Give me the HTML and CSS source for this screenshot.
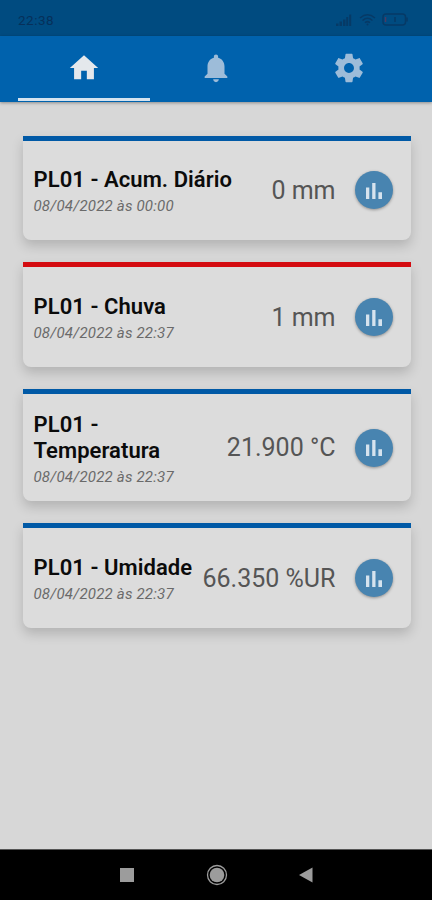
FILE: index.html
```html
<!DOCTYPE html>
<html lang="pt-BR">

<head>
    <meta charset="UTF-8">
    <meta name="viewport" content="width=device-width, initial-scale=1.0">
    <title>PL01</title>
    <link rel="stylesheet" href="styles.css">
</head>

<body>
    <div class="status">
        <span class="clock">22:38</span>
        <svg class="signal" width="16" height="12" viewBox="0 0 16 12">
            <path d="M0 9.5h2.5V12H0zM3.5 7.5H6V12H3.5zM7 5.5h2.5V12H7zM10.2 3h2V12h-2zM13.2 0.5h2V12h-2z" />
        </svg>
        <svg class="wifi" width="17" height="13" viewBox="0 0 17 13">
            <path d="M1 5Q8.500-1.500 16 5M3.500 7.500Q8.500 3 13.500 7.500M6 9.800Q8.500 7.500 11 9.800" />
            <circle cx="8.500" cy="11.500" r="1" />
        </svg>
        <svg class="battery" width="26" height="13" viewBox="0 0 26 13">
            <rect x="1" y="1" width="22.500" height="11" rx="3" />
            <path d="M25 4.500v4M13 4v5" />
            <path class="low" d="M3.500 4v5" />
        </svg>
    </div>

    <nav class="tabs">
        <a class="tab active">
            <svg viewBox="0 0 24 24"><path d="M10 20v-6h4v6h5v-8h3L12 3 2 12h3v8z" /></svg>
        </a>
        <a class="tab">
            <svg viewBox="0 0 24 24"><path d="M12 22c1.100 0 2-.9 2-2h-4c0 1.100.89 2 2 2zm6-6v-5c0-3.070-1.640-5.640-4.500-6.320V4c0-.83-.67-1.500-1.500-1.500s-1.500.67-1.500 1.500v.68C7.630 5.360 6 7.920 6 11v5l-2 2v1h16v-1l-2-2z" /></svg>
        </a>
        <a class="tab">
            <svg viewBox="0 0 24 24"><path d="M19.430 12.980c.04-.32.07-.64.07-.98s-.03-.66-.07-.98l2.110-1.650c.19-.15.24-.42.12-.64l-2-3.460c-.12-.22-.39-.3-.61-.22l-2.490 1c-.52-.4-1.080-.73-1.690-.98l-.38-2.650C14.460 2.180 14.250 2 14 2h-4c-.25 0-.46.18-.49.42l-.38 2.650c-.61.25-1.170.59-1.690.98l-2.490-1c-.23-.09-.49 0-.61.22l-2 3.460c-.13.22-.07.49.12.64l2.110 1.650c-.04.32-.07.65-.07.98s.03.66.07.98l-2.110 1.650c-.19.15-.24.42-.12.64l2 3.460c.12.22.39.3.61.22l2.490-1c.52.4 1.080.73 1.690.98l.38 2.650c.03.24.24.42.49.42h4c.25 0 .46-.18.49-.42l.38-2.650c.61-.25 1.170-.59 1.690-.98l2.490 1c.23.09.49 0 .61-.22l2-3.460c.12-.22.07-.49-.12-.64l-2.110-1.650zM12 15.500c-1.930 0-3.500-1.570-3.500-3.500s1.570-3.500 3.500-3.500 3.500 1.570 3.500 3.500-1.570 3.500-3.500 3.500z" /></svg>
        </a>
    </nav>

    <main>
        <div class="card">
            <div class="info">
                <h2>PL01 - Acum. Diário</h2>
                <p>08/04/2022 às 00:00</p>
            </div>
            <span class="value">0 mm</span>
            <button type="button">
                <svg viewBox="0 0 16 16"><path d="M0 4.500h3.300V16H0zM6.200 0h3.300v16H6.200zM12.400 9.300H16V16h-3.600z" /></svg>
            </button>
        </div>

        <div class="card alert">
            <div class="info">
                <h2>PL01 - Chuva</h2>
                <p>08/04/2022 às 22:37</p>
            </div>
            <span class="value">1 mm</span>
            <button type="button">
                <svg viewBox="0 0 16 16"><path d="M0 4.500h3.300V16H0zM6.200 0h3.300v16H6.200zM12.400 9.300H16V16h-3.600z" /></svg>
            </button>
        </div>

        <div class="card tall">
            <div class="info">
                <h2>PL01 - Temperatura</h2>
                <p>08/04/2022 às 22:37</p>
            </div>
            <span class="value">21.900 °C</span>
            <button type="button">
                <svg viewBox="0 0 16 16"><path d="M0 4.500h3.300V16H0zM6.200 0h3.300v16H6.200zM12.400 9.300H16V16h-3.600z" /></svg>
            </button>
        </div>

        <div class="card">
            <div class="info">
                <h2>PL01 - Umidade</h2>
                <p>08/04/2022 às 22:37</p>
            </div>
            <span class="value">66.350 %UR</span>
            <button type="button">
                <svg viewBox="0 0 16 16"><path d="M0 4.500h3.300V16H0zM6.200 0h3.300v16H6.200zM12.400 9.300H16V16h-3.600z" /></svg>
            </button>
        </div>
    </main>

    <footer class="navbar">
        <svg viewBox="0 0 14 14" width="14" height="14"><path d="M0 0h14v14H0z" /></svg>
        <svg viewBox="0 0 22 22" width="22" height="22">
            <circle cx="11" cy="11" r="7.300" />
            <circle class="ring" cx="11" cy="11" r="9.500" />
        </svg>
        <svg viewBox="0 0 14 16" width="14" height="16"><path d="M0 8L13.500 0.500v15z" /></svg>
    </footer>
</body>

</html>
```

FILE: styles.css
```css
* {
    box-sizing: border-box;
}

body {
    font-family: Roboto, "Liberation Sans", sans-serif;
    background: #d7d7d7;
    margin: 0;
    height: 900px;
    display: flex;
    flex-direction: column;
    overflow: hidden;
}

.status {
    height: 36px;
    background: #004b80;
    display: flex;
    align-items: center;
    padding: 3px 24px 0 18px;
}

.clock {
    flex: 1;
    font-size: 13.5px;
    font-weight: 400;
    letter-spacing: 0.5px;
    color: #06305a;
}

.status svg {
    fill: #063a66;
}

.wifi {
    margin: 0 6px 0 7px;
}

.wifi path,
.battery rect,
.battery path {
    fill: none;
    stroke: #063a66;
    stroke-width: 1.5;
}

.battery .low {
    stroke: #4b3a62;
}

.tabs {
    height: 66px;
    background: #0062ad;
    display: flex;
    padding: 0 17px 0 18px;
    box-shadow: 0 1px 3px rgba(0, 0, 0, 0.35);
}

.tab {
    flex: 1;
    display: flex;
    justify-content: center;
    padding-top: 15px;
    border-bottom: 3px solid transparent;
    height: 64.5px;
}

.tab svg {
    width: 34px;
    height: 34px;
    fill: #9dbcd9;
}

.active {
    border-color: #d5e3ef;
}

.active svg {
    fill: #e4e8ec;
}

main {
    flex: 1;
    display: flex;
    flex-direction: column;
    gap: 22px;
    padding: 33.5px 21.5px 0 22.5px;
}

.card {
    height: 104.7px;
    background: #dcdcdc;
    border-top: 5.5px solid #0059a6;
    border-radius: 0 0 8px 8px;
    box-shadow: 0 6px 12px rgba(0, 0, 0, 0.17);
    display: flex;
    align-items: center;
    padding: 0 18px 0 11px;
}

.alert {
    border-color: #d40b10;
}

.tall {
    height: 112.5px;
}

.info {
    flex: 1;
    padding-top: 6px;
}

.info h2 {
    margin: 0;
    font-size: 22px;
    font-weight: 600;
    line-height: 26px;
    letter-spacing: 0.06px;
    color: #0b0b0b;
}

.info p {
    margin: 0;
    font-size: 15px;
    font-style: italic;
    font-weight: 400;
    line-height: 26px;
    letter-spacing: 0.2px;
    color: #6a6a6a;
}

.value {
    font-size: 25px;
    font-weight: 400;
    letter-spacing: 0;
    color: #555;
    white-space: nowrap;
}

.card button {
    width: 38px;
    height: 38px;
    margin-left: 19px;
    padding: 1px 0 0;
    border: none;
    border-radius: 50%;
    background: #4884b0;
    box-shadow: 0 1px 3px rgba(0, 0, 0, 0.35);
    display: flex;
    align-items: center;
    justify-content: center;
}

.card button svg {
    width: 16px;
    height: 16px;
    fill: #d6e3ee;
}

.navbar {
    height: 51px;
    background: #000;
    border-top: 1px solid #555;
    display: flex;
    align-items: center;
    justify-content: space-between;
    padding: 0 119px 0 120px;
}

.navbar svg {
    fill: #9c9c9c;
}

.navbar .ring {
    fill: none;
    stroke: #9c9c9c;
    stroke-width: 1.3;
}
```
